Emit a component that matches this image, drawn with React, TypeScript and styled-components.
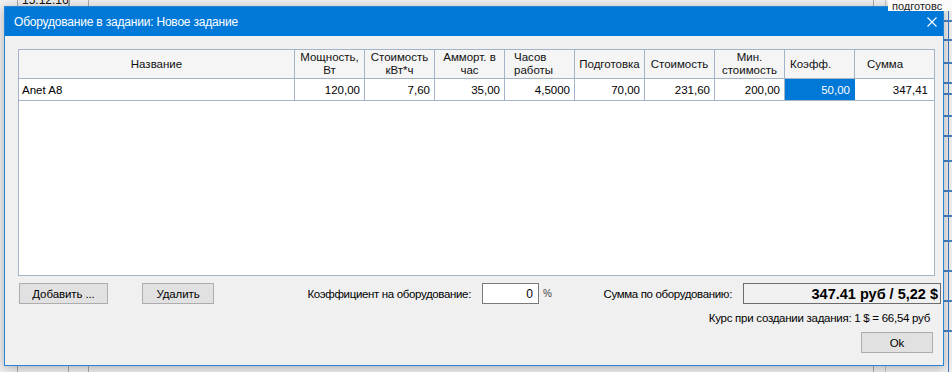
import React from "react";
import styled, { createGlobalStyle } from "styled-components";

const GlobalStyle = createGlobalStyle`
  html, body { margin: 0; padding: 0; overflow: hidden; background: #f0f0f0; }
  body { font-family: "Liberation Sans", Arial, sans-serif; font-size: 12px; color: #000; }
  * { box-sizing: border-box; }
`;

const GRID = "#a3b3c8";

const Desktop = styled.div`
  position: relative;
  width: 952px;
  height: 372px;
  overflow: hidden;
  background: #f0f0f0;
`;

/* fragments of the window behind the dialog */
const BackCell = styled.div`
  position: absolute;
  left: 18px;
  top: -6px;
  width: 52px;
  height: 12px;
  padding-left: 4px;
  font-size: 12px;
  line-height: 12px;
  color: #111;
  background: #ececec;
  border-right: 1px solid #9a9a9a;
`;

const BackVLine = styled.div<{ $x: number; $color?: string }>`
  position: absolute;
  top: 0;
  bottom: 0;
  left: ${(p) => p.$x}px;
  width: 1px;
  background: ${(p) => p.$color || "#a8a8a8"};
`;

const BackRowMark = styled.div<{ $y: number }>`
  position: absolute;
  left: 944px;
  width: 8px;
  top: ${(p) => p.$y}px;
  height: 2px;
  background: #4a7fc0;
`;

const BackText = styled.div`
  position: absolute;
  right: 0;
  top: 0;
  width: 64px;
  height: 11px;
  padding-left: 4px;
  background: #fbfbfb;
  font-size: 11px;
  line-height: 12px;
  color: #222;
  white-space: nowrap;
  overflow: hidden;
  z-index: 2;
`;

const Dialog = styled.div`
  position: absolute;
  left: 4px;
  top: 6px;
  width: 940px;
  height: 360px;
  border: 1px solid #2a84d4;
  box-shadow: 0 2px 10px rgba(0, 0, 0, 0.28);
  display: flex;
  flex-direction: column;
  background: #f0f0f0;
  z-index: 1;
`;

const TitleBar = styled.div`
  height: 29px;
  flex: none;
  background: #0078d7;
  color: #fff;
  display: flex;
  align-items: center;
  padding-left: 9px;
  font-size: 12px;
  letter-spacing: -0.2px;
`;

const TitleText = styled.span`
  flex: 1;
`;

const CloseBtn = styled.div`
  width: 10px;
  height: 10px;
  margin-right: 6px;
  display: flex;
`;

const Content = styled.div`
  flex: 1;
  display: flex;
  flex-direction: column;
  padding: 13px 8px 0 13px;
`;

const Grid = styled.div`
  width: 917px;
  height: 227px;
  border: 1px solid ${GRID};
  background: #fff;
  flex: none;
`;

const Row = styled.div<{ $header?: boolean }>`
  display: grid;
  grid-template-columns: 276px repeat(8, 70px) 1fr;
  height: ${(p) => (p.$header ? 29 : 22)}px;
  border-bottom: 1px solid ${GRID};
  background: ${(p) => (p.$header ? "#f5f5f5" : "#fff")};
`;

const HeadCell = styled.div<{ $align?: "left" | "center"; $pad?: number }>`
  display: flex;
  align-items: center;
  justify-content: ${(p) => (p.$align === "left" ? "flex-start" : "center")};
  text-align: ${(p) => p.$align || "center"};
  padding-left: ${(p) => p.$pad || 0}px;
  border-right: 1px solid ${GRID};
  font-size: 11.5px;
  line-height: 13px;
  color: #111;
  &:last-child { border-right: none; }
`;

const Cell = styled.div<{ $left?: boolean; $selected?: boolean }>`
  display: flex;
  align-items: center;
  justify-content: ${(p) => (p.$left ? "flex-start" : "flex-end")};
  padding: ${(p) => (p.$left ? "0 0 0 3px" : "0 4px 0 0")};
  border-right: 1px solid ${(p) => (p.$selected ? "#0078d7" : GRID)};
  background: ${(p) => (p.$selected ? "#0078d7" : "transparent")};
  color: ${(p) => (p.$selected ? "#fff" : "#000")};
  font-size: 11.5px;
  &:last-child { border-right: none; padding-right: 6px; }
`;

const ControlsRow = styled.div`
  display: flex;
  align-items: center;
  height: 21px;
  margin-top: 7px;
  flex: none;
`;

const Button = styled.button<{ $w: number; $ml?: number }>`
  width: ${(p) => p.$w}px;
  height: 21px;
  margin: 0 0 0 ${(p) => p.$ml || 0}px;
  padding: 0;
  background: #e1e1e1;
  border: 1px solid #adadad;
  border-radius: 0;
  font-family: "Liberation Sans", Arial, sans-serif;
  font-size: 11.5px;
  letter-spacing: -0.1px;
  color: #000;
  flex: none;
`;

const FieldLabel = styled.div<{ $w: number }>`
  width: ${(p) => p.$w}px;
  text-align: right;
  font-size: 11.5px;
  letter-spacing: -0.35px;
  white-space: nowrap;
  flex: none;
`;

const NumInput = styled.div`
  width: 57px;
  height: 21px;
  margin-left: 11px;
  border: 1px solid #7a7a7a;
  background: #fff;
  display: flex;
  align-items: center;
  justify-content: flex-end;
  padding-right: 5px;
  font-size: 12px;
  flex: none;
`;

const Unit = styled.span`
  width: 11px;
  margin-left: 4px;
  font-size: 10px;
  color: #444;
  flex: none;
`;

const SumBox = styled.div`
  width: 198px;
  height: 21px;
  margin-left: 11px;
  border: 1px solid #6d6d6d;
  background: #f0f0f0;
  display: flex;
  align-items: center;
  justify-content: flex-end;
  padding-right: 2px;
  font-size: 14.5px;
  font-weight: bold;
  flex: none;
`;

const RateLine = styled.div`
  margin-top: 7px;
  height: 14px;
  padding-right: 5px;
  text-align: right;
  font-size: 11.5px;
  letter-spacing: -0.27px;
  line-height: 14px;
  white-space: nowrap;
`;

const OkRow = styled.div`
  display: flex;
  justify-content: flex-end;
  margin-top: 7px;
  padding-right: 2px;
`;

const headers: { label: React.ReactNode; align?: "left" | "center"; pad?: number }[] = [
  { label: "Название" },
  { label: <>Мощность,<br />Вт</> },
  { label: <>Стоимость<br />кВт*ч</> },
  { label: <>Амморт. в<br />час</> },
  { label: <>Часов<br />работы</>, align: "left", pad: 9 },
  { label: "Подготовка" },
  { label: "Стоимость" },
  { label: <>Мин.<br />стоимость</> },
  { label: "Коэфф.", align: "left", pad: 5 },
  { label: "Сумма", align: "left", pad: 12 },
];

const values = ["120,00", "7,60", "35,00", "4,5000", "70,00", "231,60", "200,00", "50,00", "347,41"];

export default function App() {
  return (
    <Desktop>
      <GlobalStyle />
      <BackCell>15.12.16</BackCell>
      <BackVLine $x={88} />
      <BackVLine $x={17} />
      <BackVLine $x={68} />
      <BackVLine $x={873} />
      <BackVLine $x={885} $color="#c4c4c4" />
      <BackVLine $x={948} $color="#3f78bf" />
      {[20, 39, 62, 82, 93, 115, 135, 160, 190, 215, 240, 270, 300, 330].map((y) => (
        <BackRowMark key={y} $y={y} />
      ))}
      <BackText>подготовс</BackText>
      <Dialog>
        <TitleBar>
          <TitleText>Оборудование в задании: Новое задание</TitleText>
          <CloseBtn>
            <svg width="10" height="10" viewBox="0 0 10 10">
              <path d="M0.5 0.5 L9.5 9.5 M9.5 0.5 L0.5 9.5" stroke="#fff" strokeWidth="1.1" />
            </svg>
          </CloseBtn>
        </TitleBar>
        <Content>
          <Grid>
            <Row $header>
              {headers.map((h, i) => (
                <HeadCell key={i} $align={h.align} $pad={h.pad}>
                  {h.label}
                </HeadCell>
              ))}
            </Row>
            <Row>
              <Cell $left>Anet A8</Cell>
              {values.map((v, i) => (
                <Cell key={i} $selected={i === 7}>
                  {v}
                </Cell>
              ))}
            </Row>
          </Grid>
          <ControlsRow>
            <Button $w={89} $ml={1}>Добавить ...</Button>
            <Button $w={72} $ml={34}>Удалить</Button>
            <FieldLabel $w={257}>Коэффициент на оборудование:</FieldLabel>
            <NumInput>0</NumInput>
            <Unit>%</Unit>
            <FieldLabel $w={178}>Сумма по оборудованию:</FieldLabel>
            <SumBox>347.41 руб / 5,22 $</SumBox>
          </ControlsRow>
          <RateLine>Курс при создании задания: 1 $ = 66,54 руб</RateLine>
          <OkRow>
            <Button $w={72}>Ok</Button>
          </OkRow>
        </Content>
      </Dialog>
    </Desktop>
  );
}
